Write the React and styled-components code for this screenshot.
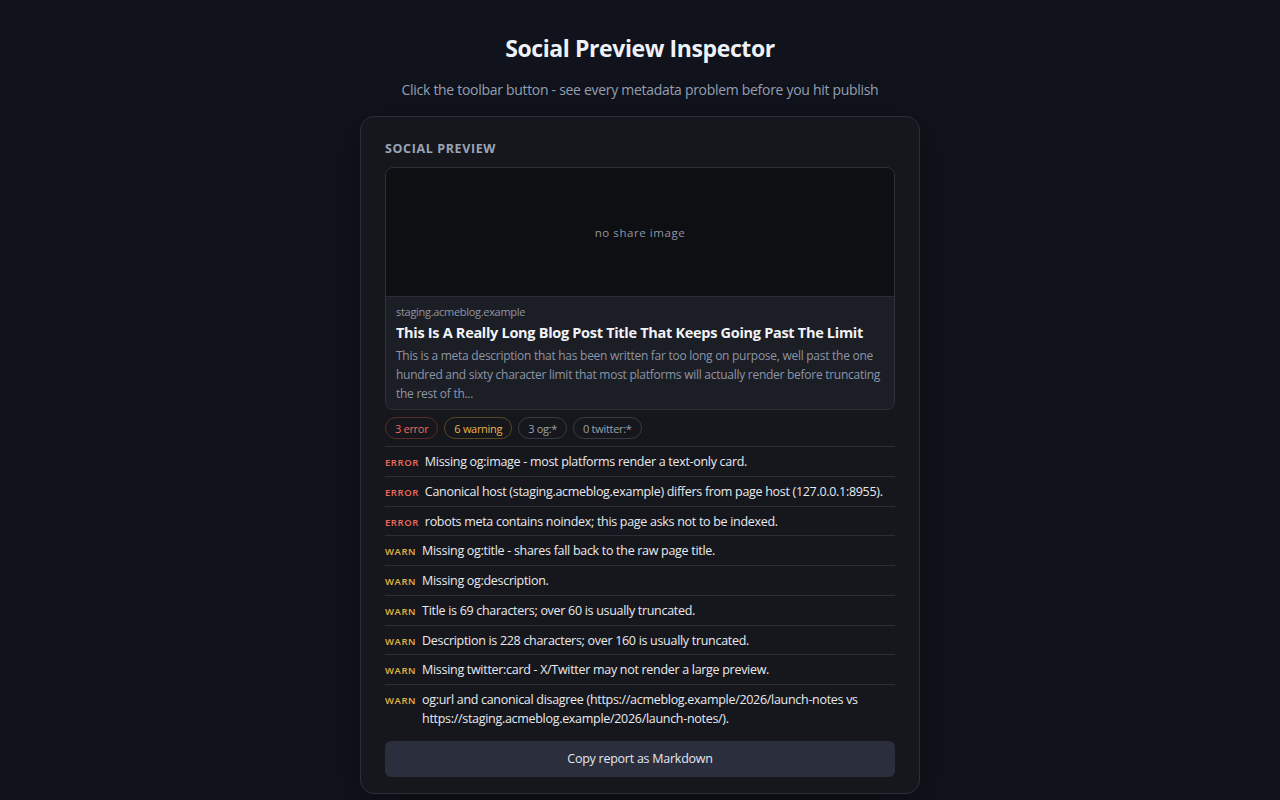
import React from "react";
import styled, { createGlobalStyle } from "styled-components";

const GlobalStyle = createGlobalStyle`
  html, body {
    margin: 0;
    padding: 0;
    background: #10131b;
  }
  body {
    font-family: "Open Sans", "Noto Sans", "Liberation Sans", sans-serif;
    color: #e6e8ee;
    -webkit-font-smoothing: antialiased;
  }
`;

const issues = [
  { level: "error", text: "Missing og:image - most platforms render a text-only card." },
  { level: "error", text: "Canonical host (staging.acmeblog.example) differs from page host (127.0.0.1:8955)." },
  { level: "error", text: "robots meta contains noindex; this page asks not to be indexed." },
  { level: "warn", text: "Missing og:title - shares fall back to the raw page title." },
  { level: "warn", text: "Missing og:description." },
  { level: "warn", text: "Title is 69 characters; over 60 is usually truncated." },
  { level: "warn", text: "Description is 228 characters; over 160 is usually truncated." },
  { level: "warn", text: "Missing twitter:card - X/Twitter may not render a large preview." },
  {
    level: "warn",
    text: "og:url and canonical disagree (https://acmeblog.example/2026/launch-notes vs https://staging.acmeblog.example/2026/launch-notes/).",
  },
];

function App() {
  return (
    <Page>
      <GlobalStyle />
      <Title>Social Preview Inspector</Title>
      <Subtitle>Click the toolbar button - see every metadata problem before you hit publish</Subtitle>
      <Card>
        <SectionLabel>Social Preview</SectionLabel>
        <Preview>
          <ImageSlot>no share image</ImageSlot>
          <PreviewBody>
            <Domain>staging.acmeblog.example</Domain>
            <PreviewTitle>This Is A Really Long Blog Post Title That Keeps Going Past The Limit</PreviewTitle>
            <PreviewDesc>
              This is a meta description that has been written far too long on purpose, well past the one
              hundred and sixty character limit that most platforms will actually render before truncating
              the rest of th...
            </PreviewDesc>
          </PreviewBody>
        </Preview>
        <Chips>
          <Chip $tone="error">3 error</Chip>
          <Chip $tone="warn">6 warning</Chip>
          <Chip>3 og:*</Chip>
          <Chip>0 twitter:*</Chip>
        </Chips>
        <IssueList>
          {issues.map((issue, i) => (
            <Issue key={i}>
              <Level $tone={issue.level}>{issue.level === "error" ? "ERROR" : "WARN"}</Level>
              <Message>{issue.text}</Message>
            </Issue>
          ))}
        </IssueList>
        <CopyButton>Copy report as Markdown</CopyButton>
      </Card>
    </Page>
  );
}

export default App;

const Page = styled.div`
  display: flex;
  flex-direction: column;
  align-items: center;
  padding: 32px 0 40px;
`;

const Title = styled.h1`
  margin: 0;
  font-size: 23px;
  line-height: 32px;
  font-weight: 700;
  letter-spacing: -0.4px;
  color: #eef1f7;
`;

const Subtitle = styled.p`
  margin: 16px 0 16px;
  font-size: 14px;
  line-height: 20px;
  letter-spacing: -0.3px;
  color: #95a0b3;
`;

const Card = styled.div`
  width: 510px;
  padding: 24px 24px 16px;
  background: #16171c;
  border: 1px solid #2b2e38;
  border-radius: 14px;
  box-shadow: 0 12px 40px rgba(0, 0, 0, 0.35);
`;

const SectionLabel = styled.div`
  font-size: 12.5px;
  line-height: 16px;
  font-weight: 700;
  letter-spacing: 0.05em;
  text-transform: uppercase;
  color: #9aa6b8;
  margin-bottom: 10px;
`;

const Preview = styled.div`
  border: 1px solid #2e313b;
  border-radius: 8px;
  overflow: hidden;
  background: #1c1e26;
`;

const ImageSlot = styled.div`
  height: 128px;
  display: flex;
  align-items: center;
  justify-content: center;
  background: #0e0f13;
  border-bottom: 1px solid #2a2d37;
  font-size: 11.5px;
  letter-spacing: 0.05em;
  color: #8e95a2;
`;

const PreviewBody = styled.div`
  padding: 8px 10px 6px;
`;

const Domain = styled.div`
  font-size: 11px;
  line-height: 14px;
  letter-spacing: -0.3px;
  color: #8e95a2;
`;

const PreviewTitle = styled.div`
  margin-top: 4px;
  font-size: 14.5px;
  line-height: 20px;
  font-weight: 700;
  letter-spacing: -0.3px;
  color: #f1f3f7;
`;

const PreviewDesc = styled.div`
  margin-top: 3px;
  font-size: 12px;
  line-height: 19px;
  letter-spacing: -0.27px;
  color: #8c95a5;
`;

const tones = {
  error: { border: "#5a2a2a", color: "#ef6a5e", label: "#ef6a5e" },
  warn: { border: "#574722", color: "#e8b54a", label: "#e3b341" },
  neutral: { border: "#373a45", color: "#9aa1ad", label: "#9aa1ad" },
};

const Chips = styled.div`
  display: flex;
  gap: 6px;
  margin: 7px 0 7px;
`;

const Chip = styled.span`
  display: inline-flex;
  align-items: center;
  height: 20px;
  padding: 0 9px;
  border-radius: 999px;
  border: 1px solid ${(p) => tones[p.$tone || "neutral"].border};
  color: ${(p) => tones[p.$tone || "neutral"].color};
  font-size: 11px;
  letter-spacing: -0.3px;
`;

const IssueList = styled.div`
  display: flex;
  flex-direction: column;
`;

const Issue = styled.div`
  display: flex;
  align-items: baseline;
  gap: 6px;
  padding: 5px 0 4.75px;
  border-top: 1px solid #2a2d37;
`;

const Level = styled.span`
  flex: none;
  font-size: 9.5px;
  font-weight: 600;
  letter-spacing: 0.06em;
  color: ${(p) => tones[p.$tone].label};
`;

const Message = styled.span`
  font-size: 12.5px;
  line-height: 19px;
  letter-spacing: -0.3px;
  color: #e8eaf0;
`;

const CopyButton = styled.button`
  display: block;
  width: 100%;
  height: 36px;
  margin-top: 8px;
  border: none;
  border-radius: 6px;
  background: #2a2e3d;
  color: #e5e7ef;
  font-family: inherit;
  font-size: 12.5px;
  letter-spacing: -0.25px;
  cursor: pointer;
`;
